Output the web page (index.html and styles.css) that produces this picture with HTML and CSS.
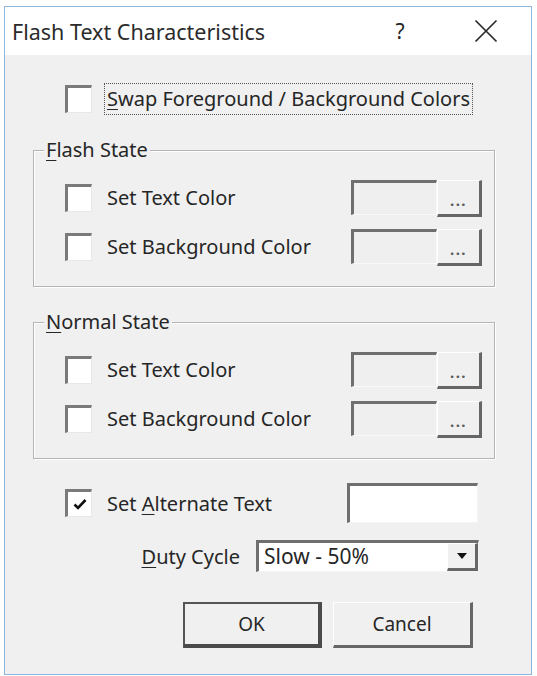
FILE: index.html
```html
<!DOCTYPE html>
<html>
<head>
<meta charset="utf-8">
<title>Flash Text Characteristics</title>
<link rel="stylesheet" href="styles.css">
</head>
<body>
<div class="window">
  <div class="titlebar">
    <span class="title">Flash Text Characteristics</span>
    <span class="help">?</span>
    <span class="close">
      <svg width="26" height="26" viewBox="0 0 26 26"><path d="M2.5 2.5L23.5 23.5M23.5 2.5L2.5 23.5" stroke="#2a2a2a" stroke-width="1.7" fill="none"/></svg>
    </span>
  </div>
  <div class="content">
    <div class="swap">
      <span class="cb"></span>
      <span class="focus"><u>S</u>wap Foreground / Background Colors</span>
    </div>

    <div class="group">
      <span class="legend"><u>F</u>lash State</span>
      <div class="row first">
        <span class="cb"></span>
        <span class="label">Set Text Color</span>
        <span class="colorbox"></span>
        <span class="dots">...</span>
      </div>
      <div class="row">
        <span class="cb"></span>
        <span class="label">Set Background Color</span>
        <span class="colorbox"></span>
        <span class="dots">...</span>
      </div>
    </div>

    <div class="group second">
      <span class="legend"><u>N</u>ormal State</span>
      <div class="row first">
        <span class="cb"></span>
        <span class="label">Set Text Color</span>
        <span class="colorbox"></span>
        <span class="dots">...</span>
      </div>
      <div class="row">
        <span class="cb"></span>
        <span class="label">Set Background Color</span>
        <span class="colorbox"></span>
        <span class="dots">...</span>
      </div>
    </div>

    <div class="alt">
      <span class="cb checked">
        <svg width="16" height="16" viewBox="0 0 16 16"><path d="M2.5 8.5L6 12L13.5 4" stroke="#111" stroke-width="2.6" fill="none"/></svg>
      </span>
      <span class="label">Set <u>A</u>lternate Text</span>
      <span class="textbox"></span>
    </div>

    <div class="duty">
      <span class="duty-label"><u>D</u>uty Cycle</span>
      <div class="combo">
        <span class="combo-text">Slow - 50%</span>
        <span class="combo-btn"><svg width="10" height="6" viewBox="0 0 10 6"><path d="M0 0H10L5 6Z" fill="#111"/></svg></span>
      </div>
    </div>

    <div class="buttons">
      <span class="btn default">OK</span>
      <span class="btn">Cancel</span>
    </div>
  </div>
</div>
</body>
</html>
```

FILE: styles.css
```css
body {
  margin: 0;
  background: #ffffff;
  font-family: "Noto Sans", "Open Sans", sans-serif;
  font-size: 20px;
  color: #262626;
}

u { text-decoration-thickness: 1px; text-underline-offset: 3px; }

.window {
  margin: 6px 0 0 4px;
  width: 528px;
  box-sizing: border-box;
  border: 1px solid #8db6de;
  background: #f0f0f0;
}

.titlebar {
  height: 48px;
  background: #ffffff;
  display: flex;
  align-items: center;
  padding-left: 7px;
}

.title { flex: 1; font-size: 21.5px; color: #2b2b2b; }

.help {
  width: 40px;
  text-align: center;
  font-size: 21px;
  margin-right: 46px;
}

.close {
  width: 40px;
  margin-right: 25px;
  display: flex;
  justify-content: center;
}

.content {
  padding: 0 0 26px 0;
}

.cb {
  width: 27px;
  height: 28px;
  box-sizing: border-box;
  background: #ffffff;
  border-top: 3px solid #7a7a7a;
  border-left: 3px solid #7a7a7a;
  border-right: 1px solid #e8e8e8;
  border-bottom: 1px solid #e8e8e8;
  flex: none;
  display: flex;
  align-items: center;
  justify-content: center;
}

.swap {
  margin: 28px 0 0 60px;
  height: 32px;
  display: flex;
  align-items: center;
}

.focus {
  margin-left: 12px;
  border: 1px dotted #555;
  padding: 0 2px 0 2px;
  line-height: 30px;
}

.group {
  margin: 35px 0 0 28px;
  width: 462px;
  box-sizing: border-box;
  border: 1px solid #b4b4b4;
  box-shadow: inset 1px 1px #ffffff, 1px 1px #ffffff;
  padding: 0 12px 22px 31px;
}

.group.second { margin-top: 35px; }

.legend {
  display: table;
  margin: -14px 0 0 -21px;
  padding: 0 2px;
  line-height: 26px;
  background: #f0f0f0;
}

.row {
  display: flex;
  align-items: center;
  height: 35px;
  margin-top: 14px;
}

.row.first { margin-top: 17px; }

.label { margin-left: 15px; }

.colorbox {
  margin-left: auto;
  width: 86px;
  height: 35px;
  box-sizing: border-box;
  border-top: 3px solid #6f6f6f;
  border-left: 3px solid #6f6f6f;
  border-right: 1px solid #f8f8f8;
  border-bottom: 1px solid #f8f8f8;
  background: #efefef;
}

.dots {
  width: 45px;
  height: 37px;
  margin-top: 2px;
  box-sizing: border-box;
  border-top: 1px solid #ffffff;
  border-left: 1px solid #ffffff;
  border-right: 3px solid #666666;
  border-bottom: 3px solid #666666;
  background: #f0f0f0;
  font-size: 15px;
  font-weight: bold;
  color: #5a5a5a;
  text-align: center;
  line-height: 38px;
  letter-spacing: 1.5px;
}

.alt {
  margin: 24px 0 0 60px;
  width: 413px;
  height: 40px;
  display: flex;
  align-items: center;
}

.textbox {
  margin-left: auto;
  width: 131px;
  height: 40px;
  box-sizing: border-box;
  border-top: 3px solid #6f6f6f;
  border-left: 3px solid #6f6f6f;
  border-right: 1px solid #f4f4f4;
  border-bottom: 1px solid #f4f4f4;
  background: #ffffff;
}

.duty {
  margin-top: 17px;
  width: 474px;
  height: 32px;
  display: flex;
  justify-content: flex-end;
  align-items: center;
}

.duty-label { margin-right: 16px; }

.combo {
  width: 223px;
  height: 32px;
  box-sizing: border-box;
  border-top: 3px solid #6f6f6f;
  border-left: 3px solid #6f6f6f;
  border-right: 1px solid #f4f4f4;
  border-bottom: 1px solid #f4f4f4;
  background: #ffffff;
  display: flex;
  align-items: stretch;
}

.combo-text {
  flex: 1;
  padding-left: 5px;
  font-size: 21px;
  line-height: 27px;
}

.combo-btn {
  width: 31px;
  box-sizing: border-box;
  background: #f0f0f0;
  border-top: 1px solid #ffffff;
  border-left: 1px solid #ffffff;
  border-right: 3px solid #666666;
  border-bottom: 3px solid #666666;
  display: flex;
  align-items: center;
  justify-content: center;
}

.buttons {
  margin-top: 30px;
  padding-right: 58px;
  display: flex;
  justify-content: flex-end;
  gap: 11px;
}

.btn {
  width: 140px;
  height: 46px;
  box-sizing: border-box;
  background: #f0f0f0;
  border-top: 1px solid #ffffff;
  border-left: 1px solid #ffffff;
  border-right: 3px solid #666666;
  border-bottom: 3px solid #666666;
  display: flex;
  align-items: center;
  justify-content: center;
  font-size: 19px;
}

.btn.default {
  width: 139px;
  border-top: 2px solid #555555;
  border-left: 2px solid #555555;
  border-right: 4px solid #4a4a4a;
  border-bottom: 4px solid #4a4a4a;
}
```
